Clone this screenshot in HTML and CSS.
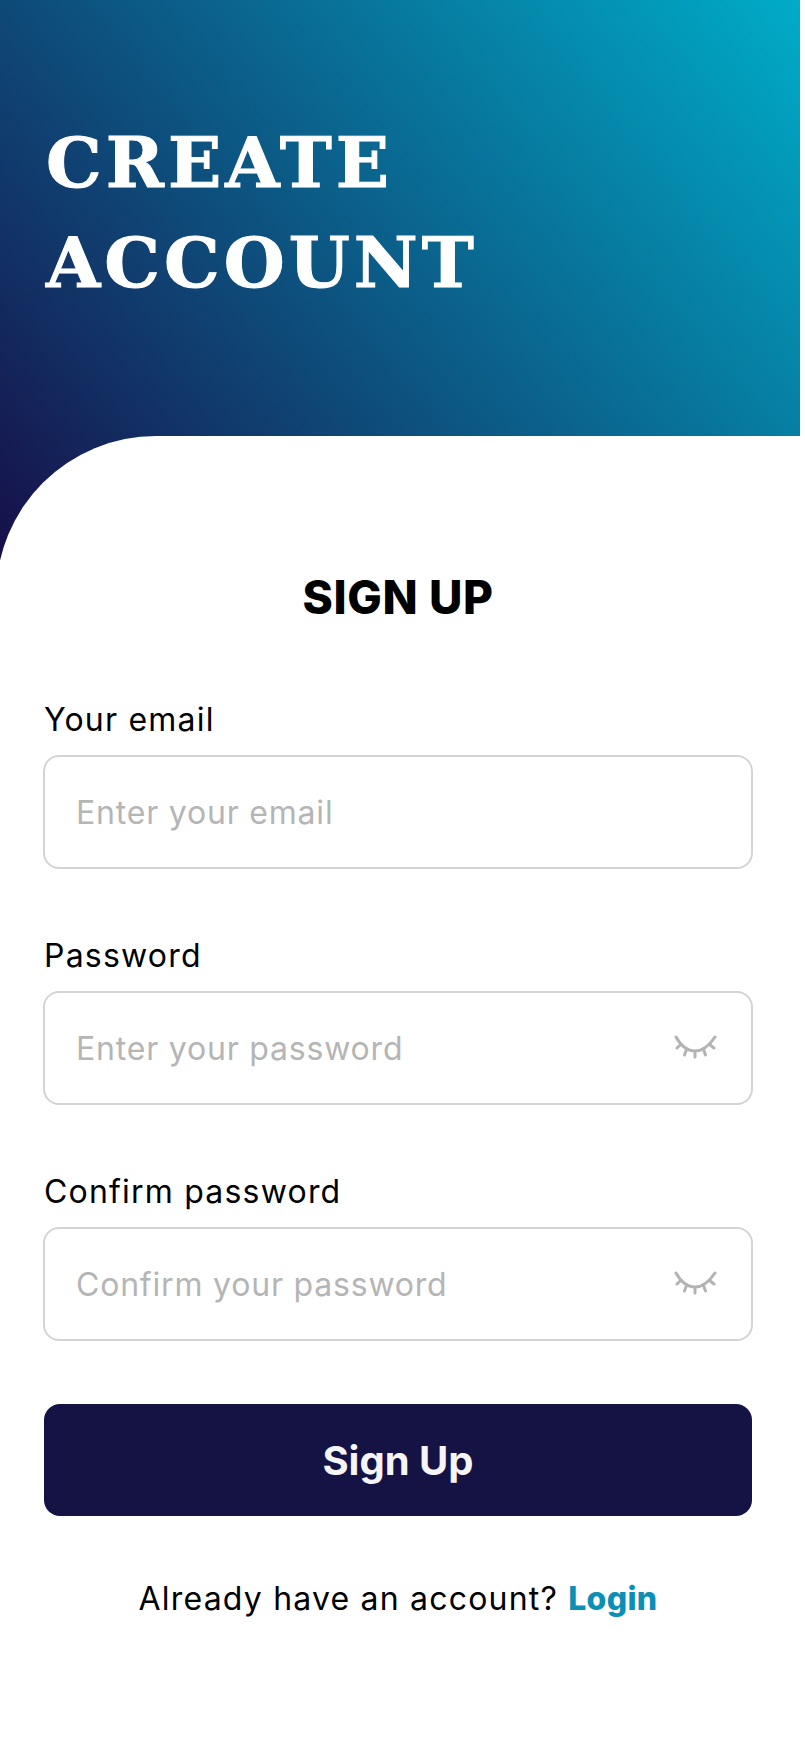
FILE: index.html
```html
<!DOCTYPE html>
<html lang="en">
<head>
<meta charset="utf-8">
<title>Create Account</title>
<link rel="stylesheet" href="styles.css">
</head>
<body>
<header class="hero">
  <h1 class="hero-title">CREATE<br>ACCOUNT</h1>
</header>
<main class="sheet">
  <h2 class="sheet-title">SIGN UP</h2>
  <form class="form">
    <div class="field">
      <label class="label">Your email</label>
      <div class="input"><span class="placeholder">Enter your email</span></div>
    </div>
    <div class="field">
      <label class="label">Password</label>
      <div class="input"><span class="placeholder">Enter your password</span>
        <svg class="eye" viewBox="0 0 46 24" aria-hidden="true"><path d="M4 2C9 11 15 16 23 16S37 11 43 2M23 16V22M14.500 14.500L12.500 20M31.500 14.500L33.500 20M8.500 9.500L5 13M37.500 9.500L42 13"/></svg>
      </div>
    </div>
    <div class="field">
      <label class="label">Confirm password</label>
      <div class="input"><span class="placeholder">Confirm your password</span>
        <svg class="eye" viewBox="0 0 46 24" aria-hidden="true"><path d="M4 2C9 11 15 16 23 16S37 11 43 2M23 16V22M14.500 14.500L12.500 20M31.500 14.500L33.500 20M8.500 9.500L5 13M37.500 9.500L42 13"/></svg>
      </div>
    </div>
    <button class="submit" type="button">Sign Up</button>
  </form>
  <p class="switch">Already have an account? <a class="switch-link">Login</a></p>
</main>
</body>
</html>
```
FILE: styles.css
```css
* { box-sizing: border-box; }
html, body { margin: 0; padding: 0; }
body {
  width: 805px;
  height: 1748px;
  overflow: hidden;
  background: #fff;
  font-family: Inter, "Liberation Sans", sans-serif;
  color: #000;
}
.hero {
  width: 800px;
  height: 560px;
  padding: 113px 0 0 46px;
  background: linear-gradient(50deg, #170f49, #00acc8);
}
.hero-title {
  margin: 0;
  font-family: "DejaVu Serif", serif;
  font-weight: 700;
  font-size: 70px;
  line-height: 100px;
  letter-spacing: 4px;
  -webkit-text-stroke: 1px #fff;
  color: #fff;
}
.sheet {
  width: 809px;
  height: 1312px;
  margin: -124px 0 0 -4px;
  padding: 133px 0 0 48px;
  background: #fff;
  border-top-left-radius: 160px;
}
.sheet-title {
  width: 708px;
  margin: 0;
  text-align: center;
  font-size: 46px;
  font-weight: 800;
  line-height: 56px;
  letter-spacing: 0.6px;
}
.form {
  width: 708px;
  margin-top: 75px;
  display: flex;
  flex-direction: column;
  gap: 68px;
}
.field { display: flex; flex-direction: column; gap: 17px; }
.label { font-size: 32px; line-height: 39px; letter-spacing: 1.2px; }
.input {
  height: 114px;
  margin: -1px;
  padding: 0 31px;
  display: flex;
  align-items: center;
  justify-content: space-between;
  border: 2px solid #d4d4d4;
  border-radius: 16px;
}
.placeholder { font-size: 32px; line-height: 50px; padding-top: 2px; letter-spacing: 0.8px; color: #b5b5b5; }
.eye {
  width: 46px;
  height: 24px;
  margin: -2px 2px 0 0;
  fill: none;
  stroke: #b3b3b3;
  stroke-width: 3;
  stroke-linecap: round;
}
.submit {
  height: 112px;
  margin-top: -4px;
  border: 0;
  border-radius: 16px;
  background: #151244;
  color: #f5f5f7;
  font-family: Inter, sans-serif;
  font-size: 40px;
  font-weight: 700;
}
.switch {
  width: 708px;
  margin: 59px 0 0;
  text-align: center;
  font-size: 32px;
  line-height: 48px;
  letter-spacing: 1.2px;
}
.switch-link { color: #0a8fb5; font-weight: 800; letter-spacing: 0.3px; }
```
